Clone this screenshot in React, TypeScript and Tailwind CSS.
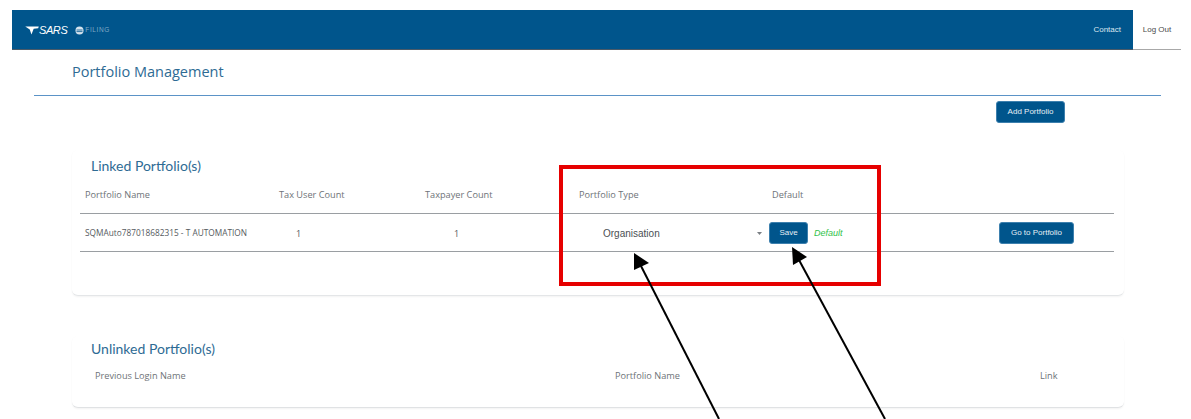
import React from "react";

const sans = "font-['Liberation_Sans',Arial,sans-serif]";
const ui = "font-['Open_Sans','Noto_Sans',sans-serif]";
const head = "font-['Lato','Open_Sans',sans-serif]";
const cols = "grid grid-cols-[194px_146px_154px_193px_232px_115px]";

function Btn({ children, className = "" }: { children: React.ReactNode; className?: string }) {
  return (
    <button className={`h-[22px] rounded-[3px] bg-[#00558c] border border-[#3d80ae] text-[8px] text-[#e6eef4] ${sans} ${className}`}>
      {children}
    </button>
  );
}

export default function App() {
  return (
    <div className={`relative w-[1191px] h-[419px] overflow-hidden bg-white ${ui}`}>
      <div className="pt-[10px] pl-[12px] pr-[10px]">
        <header className="flex h-[40px]">
          <div className="flex-1 flex items-center bg-[#00558c] border-b border-[#4a5a68] pl-[13px] pr-[12px]">
            <svg width="14" height="9" viewBox="0 0 12 8" className="mt-[1px]">
              <path d="M0 0.5 L12 0.5 L11.5 2 L7.5 2.4 L5.5 7.5 L4 3 Z" fill="#fff" />
            </svg>
            <span className={`mt-[2px] text-[11px] italic tracking-[-0.4px] text-white ${sans}`}>SARS</span>
            <svg width="9" height="9" viewBox="0 0 9 9" className="ml-[8px] mt-[1px]">
              <circle cx="4.5" cy="4.5" r="4" fill="#d5e3ee" />
              <path d="M1.5 4 H7.5 M1.5 5.6 H7.5" stroke="#00558c" strokeWidth="0.8" />
            </svg>
            <span className={`ml-[1px] mt-[1px] text-[6.5px] tracking-[0.6px] text-[#7fa8c4] ${sans}`}>FILING</span>
            <span className={`ml-auto text-[8px] text-[#dbe7f0] ${sans}`}>Contact</span>
          </div>
          <div className={`w-[48px] flex items-center justify-center border-b border-[#a8a8a8] text-[8px] text-[#4b4b4b] ${sans}`}>
            Log Out
          </div>
        </header>

        <div className={`ml-[60px] mt-[12px] text-[14.5px] leading-[20px] text-[#2e6b94] ${ui}`}>Portfolio Management</div>

        <div className="ml-[22px] mr-[20px] mt-[13px] h-px bg-[#5b93c7]" />

        <div className="flex justify-end mr-[116px] mt-[5px]">
          <Btn className="w-[69px]">Add Portfolio</Btn>
        </div>

        <section className="ml-[60px] mr-[57px] mt-[27px] h-[146px] rounded-[6px] bg-white border-b border-[#e4e6e8] shadow-[0_1px_2px_rgba(0,0,0,0.05)] px-[8px] pt-[6px]">
          <h2 className={`ml-[11px] text-[14px] leading-[20px] font-normal text-[#2e6b94] ${head}`}>Linked Portfolio(s)</h2>
          <div className={`${cols} mt-[6px] h-[31px] items-start pt-[6px] text-[9.2px] leading-[14px] text-[#6e7378]`}>
            <div className="pl-[5px]">Portfolio Name</div>
            <div className="pl-[5px]">Tax User Count</div>
            <div className="pl-[5px]">Taxpayer Count</div>
            <div className="pl-[5px]">Portfolio Type</div>
            <div className="pl-[5px]">Default</div>
            <div />
          </div>
          <div className={`${cols} h-[39px] w-[1034px] items-center border-y border-[#9a9ea2] text-[8.3px] text-[#555a5e]`}>
            <div className="mt-[2px] pl-[5px] whitespace-nowrap">SQMAuto787018682315 - T AUTOMATION</div>
            <div className="mt-[2px] pl-[22px] text-[9px]">1</div>
            <div className="mt-[2px] pl-[34px] text-[9px]">1</div>
            <div className={`mt-[2px] flex items-center justify-between pl-[29px] pr-[5px] text-[10px] text-[#4b4f53] ${sans}`}>
              <span>Organisation</span>
              <svg width="5" height="3" viewBox="0 0 5 3"><path d="M0 0 H5 L2.5 3 Z" fill="#7a7f84" /></svg>
            </div>
            <div className="flex items-center">
              <Btn className="ml-[2px] w-[39px]">Save</Btn>
              <span className={`ml-[6px] mt-[2px] text-[9px] italic text-[#2fc24a] ${sans}`}>Default</span>
            </div>
            <div>
              <Btn className="w-[75px]">Go to Portfolio</Btn>
            </div>
          </div>
        </section>

        <section className="ml-[60px] mr-[57px] mt-[40px] h-[72px] rounded-[6px] bg-white border-b border-[#e0e2e4] shadow-[0_1px_2px_rgba(0,0,0,0.05)] px-[8px] pt-[3px]">
          <h2 className={`ml-[11px] text-[14px] leading-[20px] font-normal text-[#2e6b94] ${head}`}>Unlinked Portfolio(s)</h2>
          <div className="flex mt-[10px] text-[9.2px] leading-[14px] text-[#6e7378]">
            <div className="w-[535px] pl-[15px]">Previous Login Name</div>
            <div className="w-[425px]">Portfolio Name</div>
            <div>Link</div>
          </div>
        </section>
      </div>

      {/* annotations over the screenshot */}
      <div className="absolute left-[559px] top-[165px] w-[322px] h-[121px] border-[4px] border-[#e60000]" />
      <svg className="absolute left-0 top-0" width="1191" height="419" viewBox="0 0 1191 419">
        <line x1="641" y1="266" x2="719" y2="419" stroke="#000" strokeWidth="2" />
        <polygon points="634,253 634,270 649,263" fill="#000" />
        <line x1="799" y1="260" x2="885" y2="419" stroke="#000" strokeWidth="2" />
        <polygon points="792,247 793,265 807,257" fill="#000" />
      </svg>
    </div>
  );
}
